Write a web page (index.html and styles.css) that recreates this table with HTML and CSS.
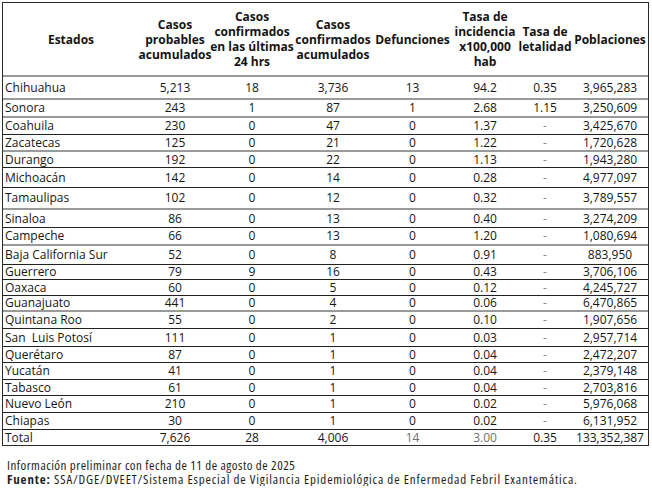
FILE: index.html
```html
<!DOCTYPE html>
<html lang="es">
<head>
<meta charset="utf-8">
<title>Casos</title>
<link rel="stylesheet" href="styles.css">
</head>
<body>
<div class="tbl">
  <div class="row head g h74">
    <div class="c">Estados</div>
    <div class="c">Casos<br>probables<br>acumulados</div>
    <div class="c">Casos<br>confirmados<br>en las últimas<br>24 hrs</div>
    <div class="c">Casos<br>confirmados<br>acumulados</div>
    <div class="c">Defunciones</div>
    <div class="c">Tasa de<br>incidencia<br>x100,000<br>hab</div>
    <div class="c">Tasa de<br>letalidad</div>
    <div class="c">Poblaciones</div>
  </div>
  <div class="row g h23"><div class="c">Chihuahua</div><div class="c">5,213</div><div class="c">18</div><div class="c">3,736</div><div class="c">13</div><div class="c">94.2</div><div class="c">0.35</div><div class="c">3,965,283</div></div>
  <div class="row g h18"><div class="c">Sonora</div><div class="c">243</div><div class="c">1</div><div class="c">87</div><div class="c">1</div><div class="c">2.68</div><div class="c">1.15</div><div class="c">3,250,609</div></div>
  <div class="row h17"><div class="c">Coahuila</div><div class="c">230</div><div class="c">0</div><div class="c">47</div><div class="c">0</div><div class="c">1.37</div><div class="c dash">-</div><div class="c">3,425,670</div></div>
  <div class="row g h17"><div class="c">Zacatecas</div><div class="c">125</div><div class="c">0</div><div class="c">21</div><div class="c">0</div><div class="c">1.22</div><div class="c dash">-</div><div class="c">1,720,628</div></div>
  <div class="row h16"><div class="c">Durango</div><div class="c">192</div><div class="c">0</div><div class="c">22</div><div class="c">0</div><div class="c">1.13</div><div class="c dash">-</div><div class="c">1,943,280</div></div>
  <div class="row h20"><div class="c">Michoacán</div><div class="c">142</div><div class="c">0</div><div class="c">14</div><div class="c">0</div><div class="c">0.28</div><div class="c dash">-</div><div class="c">4,977,097</div></div>
  <div class="row g h22"><div class="c">Tamaulipas</div><div class="c">102</div><div class="c">0</div><div class="c">12</div><div class="c">0</div><div class="c">0.32</div><div class="c dash">-</div><div class="c">3,789,557</div></div>
  <div class="row h18"><div class="c">Sinaloa</div><div class="c">86</div><div class="c">0</div><div class="c">13</div><div class="c">0</div><div class="c">0.40</div><div class="c dash">-</div><div class="c">3,274,209</div></div>
  <div class="row g h18"><div class="c">Campeche</div><div class="c">66</div><div class="c">0</div><div class="c">13</div><div class="c">0</div><div class="c">1.20</div><div class="c dash">-</div><div class="c">1,080,694</div></div>
  <div class="row h19"><div class="c">Baja California Sur</div><div class="c">52</div><div class="c">0</div><div class="c">8</div><div class="c">0</div><div class="c">0.91</div><div class="c dash">-</div><div class="c">883,950</div></div>
  <div class="row h15"><div class="c">Guerrero</div><div class="c">79</div><div class="c">9</div><div class="c">16</div><div class="c">0</div><div class="c">0.43</div><div class="c dash">-</div><div class="c">3,706,106</div></div>
  <div class="row h16"><div class="c">Oaxaca</div><div class="c">60</div><div class="c">0</div><div class="c">5</div><div class="c">0</div><div class="c">0.12</div><div class="c dash">-</div><div class="c">4,245,727</div></div>
  <div class="row g h16"><div class="c">Guanajuato</div><div class="c">441</div><div class="c">0</div><div class="c">4</div><div class="c">0</div><div class="c">0.06</div><div class="c dash">-</div><div class="c">6,470,865</div></div>
  <div class="row h17"><div class="c">Quintana Roo</div><div class="c">55</div><div class="c">0</div><div class="c">2</div><div class="c">0</div><div class="c">0.10</div><div class="c dash">-</div><div class="c">1,907,656</div></div>
  <div class="row h18"><div class="c">San&nbsp; Luis Potosí</div><div class="c">111</div><div class="c">0</div><div class="c">1</div><div class="c">0</div><div class="c">0.03</div><div class="c dash">-</div><div class="c">2,957,714</div></div>
  <div class="row h16"><div class="c">Querétaro</div><div class="c">87</div><div class="c">0</div><div class="c">1</div><div class="c">0</div><div class="c">0.04</div><div class="c dash">-</div><div class="c">2,472,207</div></div>
  <div class="row h17"><div class="c">Yucatán</div><div class="c">41</div><div class="c">0</div><div class="c">1</div><div class="c">0</div><div class="c">0.04</div><div class="c dash">-</div><div class="c">2,379,148</div></div>
  <div class="row h16"><div class="c">Tabasco</div><div class="c">61</div><div class="c">0</div><div class="c">1</div><div class="c">0</div><div class="c">0.04</div><div class="c dash">-</div><div class="c">2,703,816</div></div>
  <div class="row h17"><div class="c">Nuevo León</div><div class="c">210</div><div class="c">0</div><div class="c">1</div><div class="c">0</div><div class="c">0.02</div><div class="c dash">-</div><div class="c">5,976,068</div></div>
  <div class="row h17"><div class="c">Chiapas</div><div class="c">30</div><div class="c">0</div><div class="c">1</div><div class="c">0</div><div class="c">0.02</div><div class="c dash">-</div><div class="c">6,131,952</div></div>
  <div class="row last h15"><div class="c">Total</div><div class="c">7,626</div><div class="c">28</div><div class="c">4,006</div><div class="c muted">14</div><div class="c muted">3.00</div><div class="c">0.35</div><div class="c">133,352,387</div></div>
</div>
<div class="notes">
  <p class="note">Información preliminar con fecha de 11 de agosto de 2025</p>
  <p class="note wide"><b>Fuente:</b> SSA/DGE/DVEET/Sistema Especial de Vigilancia Epidemiológica de Enfermedad Febril Exantemática.</p>
</div>
</body>
</html>
```

FILE: styles.css
```css
html, body {
  margin: 0;
  padding: 0;
  background: #ffffff;
}
body {
  font-family: "Open Sans", "Noto Sans", sans-serif;
  color: #161616;
}
.tbl {
  margin: 2px 0 0 2px;
  width: 647px;
  border: 1px solid #2a2a2a;
  box-sizing: border-box;
}
.row {
  display: grid;
  grid-template-columns: 136px 72px 82px 80px 79px 66px 54px 76px;
  box-sizing: border-box;
  border-bottom: 1px solid #222;
  font-size: 12px;
  line-height: 14px;
}
.row.g { border-bottom: 2px solid #9a9a9a; }
.row.last { border-bottom: none; }
.row .c {
  display: flex;
  align-items: center;
  justify-content: center;
  text-align: center;
  white-space: nowrap;
}
.row .c:first-child {
  justify-content: flex-start;
  padding-left: 2px;
}
.head .c {
  font-weight: 700;
  line-height: 15px;
  color: #141414;
}
.head .c:first-child {
  justify-content: center;
  padding-left: 0;
}
.dash { color: #8a8a8a; }
.muted { color: #707070; }
.h74 { height: 74px; }
.h23 { height: 23px; }
.h22 { height: 22px; }
.h20 { height: 20px; }
.h19 { height: 19px; }
.h18 { height: 18px; }
.h17 { height: 17px; }
.h16 { height: 16px; }
.h15 { height: 15px; }
.notes {
  margin: 12px 0 0 7px;
}
.note {
  margin: 0;
  font-size: 13px;
  line-height: 14px;
  font-stretch: 75%;
  letter-spacing: 0.5px;
  color: #1e1e1e;
  white-space: nowrap;
}
.note.wide { letter-spacing: 0.85px; }
.note b { font-weight: 700; }
```
